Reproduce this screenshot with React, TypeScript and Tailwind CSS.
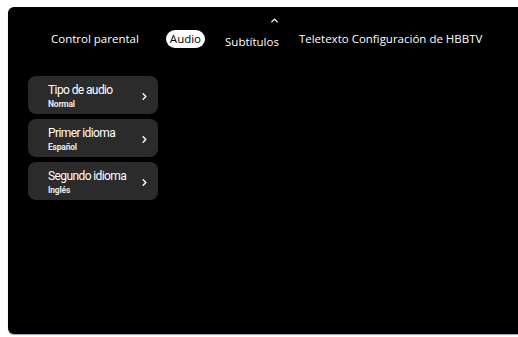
import { ChevronRight, ChevronUp } from 'lucide-react'

const items = [
  { title: 'Tipo de audio', value: 'Normal' },
  { title: 'Primer idioma', value: 'Español' },
  { title: 'Segundo idioma', value: 'Inglés' },
]

const tabFont = { fontFamily: '"Open Sans", "Noto Sans", sans-serif' }
const narrowFont = { fontFamily: 'Roboto, "Liberation Sans", sans-serif' }

export default function App() {
  return (
    <div className="h-[337px] w-[518px] overflow-hidden bg-white pt-[7px] pl-[8px]">
      <div className="flex h-[327px] flex-col rounded-l-[6px] bg-black text-white shadow-[0_1px_1px_#9ca3af]">
        <div className="flex h-[19px] items-end pl-[261px]">
          <ChevronUp className="h-[11px] w-[11px] text-white" strokeWidth={3} />
        </div>
        <div className="mt-[4px] flex items-center text-[11.5px] leading-none" style={tabFont}>
          <span className="ml-[43px]">Control parental</span>
          <span className="ml-[27px] rounded-full bg-white px-[4px] py-[3px] text-black">Audio</span>
          <span className="ml-[20px] mt-[6px]">Subtítulos</span>
          <span className="ml-[20px]">Teletexto Configuración de HBBTV</span>
        </div>
        <div className="mt-[28px] ml-[20px] flex w-[130px] flex-col gap-[5px]" style={narrowFont}>
          {items.map((it) => (
            <div
              key={it.title}
              className="flex h-[38px] items-center justify-between rounded-[8px] bg-[#2b2b2b] pr-[8px] pl-[20px]"
            >
              <div className="flex flex-col pt-[2px]">
                <span className="text-[12px] leading-[16px] tracking-[-0.6px]">{it.title}</span>
                <span className="text-[8.5px] leading-[12px] font-bold tracking-[-0.2px] text-gray-200">{it.value}</span>
              </div>
              <ChevronRight className="mt-[4px] h-[11px] w-[11px]" strokeWidth={3} />
            </div>
          ))}
        </div>
      </div>
    </div>
  )
}
